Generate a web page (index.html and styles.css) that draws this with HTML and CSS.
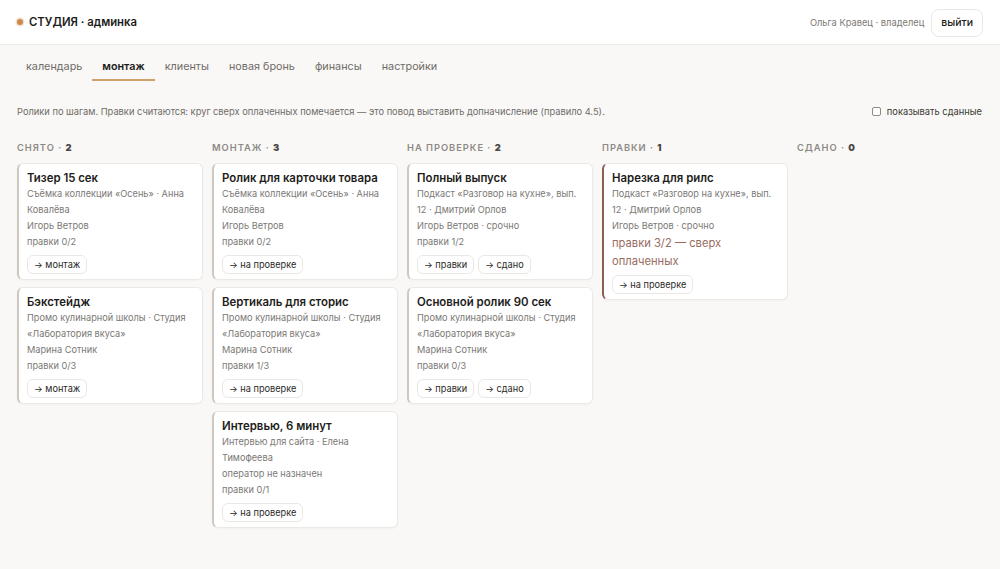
FILE: index.html
```html
<!DOCTYPE html>
<html>
<head>
    <title>СТУДИЯ · админка</title>
    <link rel="stylesheet" href="styles.css">
</head>
<body>
    <header class="topbar">
        <div class="brand"><span class="brand-dot"></span>СТУДИЯ · админка</div>
        <div class="user">
            <span class="user-name">Ольга Кравец · владелец</span>
            <button class="logout">выйти</button>
        </div>
    </header>

    <nav class="tabs">
        <a class="tab">календарь</a>
        <a class="tab active">монтаж</a>
        <a class="tab">клиенты</a>
        <a class="tab">новая бронь</a>
        <a class="tab">финансы</a>
        <a class="tab">настройки</a>
    </nav>

    <div class="intro">
        <p>Ролики по шагам. Правки считаются: круг сверх оплаченных помечается — это повод выставить допначисление (правило 4.5).</p>
        <label class="toggle"><input type="checkbox"> показывать сданные</label>
    </div>

    <main class="board">
        <section class="column">
            <h2 class="column-title">Снято · <b>2</b></h2>
            <div class="card">
                <h3>Тизер 15 сек</h3>
                <div class="meta">Съёмка коллекции «Осень» · Анна Ковалёва</div>
                <div class="meta">Игорь Ветров</div>
                <div class="meta">правки 0/2</div>
                <div class="actions"><button class="move">→ монтаж</button></div>
            </div>
            <div class="card">
                <h3>Бэкстейдж</h3>
                <div class="meta">Промо кулинарной школы · Студия «Лаборатория вкуса»</div>
                <div class="meta">Марина Сотник</div>
                <div class="meta">правки 0/3</div>
                <div class="actions"><button class="move">→ монтаж</button></div>
            </div>
        </section>

        <section class="column">
            <h2 class="column-title">Монтаж · <b>3</b></h2>
            <div class="card">
                <h3>Ролик для карточки товара</h3>
                <div class="meta">Съёмка коллекции «Осень» · Анна Ковалёва</div>
                <div class="meta">Игорь Ветров</div>
                <div class="meta">правки 0/2</div>
                <div class="actions"><button class="move">→ на проверке</button></div>
            </div>
            <div class="card">
                <h3>Вертикаль для сторис</h3>
                <div class="meta">Промо кулинарной школы · Студия «Лаборатория вкуса»</div>
                <div class="meta">Марина Сотник</div>
                <div class="meta">правки 1/3</div>
                <div class="actions"><button class="move">→ на проверке</button></div>
            </div>
            <div class="card">
                <h3>Интервью, 6 минут</h3>
                <div class="meta">Интервью для сайта · Елена Тимофеева</div>
                <div class="meta">оператор не назначен</div>
                <div class="meta">правки 0/1</div>
                <div class="actions"><button class="move">→ на проверке</button></div>
            </div>
        </section>

        <section class="column">
            <h2 class="column-title">На проверке · <b>2</b></h2>
            <div class="card">
                <h3>Полный выпуск</h3>
                <div class="meta">Подкаст «Разговор на кухне», вып. 12 · Дмитрий Орлов</div>
                <div class="meta">Игорь Ветров · срочно</div>
                <div class="meta">правки 1/2</div>
                <div class="actions"><button class="move">→ правки</button><button class="move">→ сдано</button></div>
            </div>
            <div class="card">
                <h3>Основной ролик 90 сек</h3>
                <div class="meta">Промо кулинарной школы · Студия «Лаборатория вкуса»</div>
                <div class="meta">Марина Сотник</div>
                <div class="meta">правки 0/3</div>
                <div class="actions"><button class="move">→ правки</button><button class="move">→ сдано</button></div>
            </div>
        </section>

        <section class="column">
            <h2 class="column-title">Правки · <b>1</b></h2>
            <div class="card over">
                <h3>Нарезка для рилс</h3>
                <div class="meta">Подкаст «Разговор на кухне», вып. 12 · Дмитрий Орлов</div>
                <div class="meta">Игорь Ветров · срочно</div>
                <div class="meta overpaid">правки 3/2 — сверх оплаченных</div>
                <div class="actions"><button class="move">→ на проверке</button></div>
            </div>
        </section>

        <section class="column">
            <h2 class="column-title">Сдано · <b>0</b></h2>
        </section>
    </main>
</body>
</html>
```

FILE: styles.css
```css
* {
    box-sizing: border-box;
    margin: 0;
    padding: 0;
}

body {
    font-family: Inter, "Noto Sans", sans-serif;
    background-color: #f9f8f6;
    color: #1d1c1a;
    min-height: 100vh;
}

.topbar {
    height: 45px;
    background: #ffffff;
    border-bottom: 1px solid #efedea;
    display: flex;
    align-items: center;
    justify-content: space-between;
    padding: 0 17px 0 17px;
}

.brand {
    display: flex;
    align-items: center;
    gap: 6px;
    font-size: 11.3px;
    font-weight: 600;
}

.brand-dot {
    width: 6px;
    height: 6px;
    border-radius: 50%;
    background: #c88a4d;
    box-shadow: 0 0 0 1.5px #f3e2cf;
}

.user {
    display: flex;
    align-items: center;
    gap: 7px;
}

.user-name {
    font-size: 9.3px;
    color: #7b7874;
}

.logout {
    font-family: inherit;
    font-size: 10.5px;
    font-weight: 500;
    color: #1d1c1a;
    background: #ffffff;
    border: 1px solid #ebe8e4;
    border-radius: 8px;
    height: 28px;
    padding: 0 9px;
    margin-top: 1px;
}

.tabs {
    display: flex;
    padding: 12px 16px 0;
}

.tab {
    font-size: 10.8px;
    color: #6f6c68;
    padding: 3px 10px 6px;
    border-bottom: 2px solid transparent;
}

.tab.active {
    color: #1d1c1a;
    font-weight: 600;
    border-bottom-color: #d1a06b;
}

.intro {
    display: flex;
    justify-content: space-between;
    align-items: center;
    padding: 25px 18px 0 17px;
    font-size: 9.3px;
    color: #6f6c68;
}

.toggle {
    display: flex;
    align-items: center;
    gap: 6px;
    color: #3a3835;
}

.toggle input {
    width: 9px;
    height: 9px;
    appearance: none;
    border: 1px solid #8e8b87;
    border-radius: 2px;
    background: #ffffff;
}

.board {
    display: grid;
    grid-template-columns: repeat(5, 1fr);
    gap: 9px;
    padding: 25px 17px 0;
}

.column {
    display: flex;
    flex-direction: column;
    gap: 7px;
}

.column-title {
    font-size: 9.3px;
    font-weight: 600;
    text-transform: uppercase;
    letter-spacing: 1px;
    color: #8d8a86;
    margin-bottom: 2px;
    line-height: 12px;
}

.column-title b {
    color: #4a4845;
}

.card {
    background: #ffffff;
    border: 1px solid #ece9e5;
    border-left: 2px solid #cdc8c1;
    border-radius: 6px;
    padding: 6px 9px 5px 8px;
    box-shadow: 0 1px 2px rgba(0, 0, 0, 0.03);
}

.card.over {
    border-left-color: #8c5d55;
}

.card h3 {
    font-size: 11.4px;
    font-weight: 600;
    line-height: 16px;
    color: #1d1c1a;
}

.meta {
    font-size: 9.2px;
    line-height: 16px;
    color: #7b7874;
}

.meta.overpaid {
    font-size: 11.2px;
    line-height: 18px;
    color: #9a6b5f;
}

.actions {
    display: flex;
    gap: 4px;
    margin-top: 5px;
}

.move {
    font-family: inherit;
    font-size: 9.2px;
    color: #2a2926;
    background: #ffffff;
    border: 1px solid #ebe8e4;
    border-radius: 6px;
    height: 19px;
    padding: 0 6px;
}
```
